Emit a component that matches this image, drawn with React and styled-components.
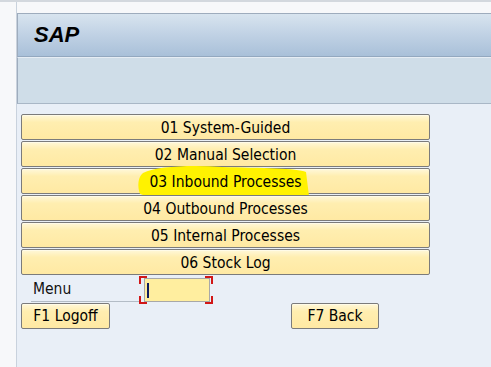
import React from "react";
import styled, { createGlobalStyle } from "styled-components";

const GlobalStyle = createGlobalStyle`
  html, body {
    margin: 0;
    padding: 0;
    width: 491px;
    height: 367px;
    overflow: hidden;
    background: #f7f8fa;
  }
  #root {
    height: 100%;
  }
`;

const menuItems = [
  "01 System-Guided",
  "02 Manual Selection",
  "03 Inbound Processes",
  "04 Outbound Processes",
  "05 Internal Processes",
  "06 Stock Log",
];

const guiFont = `"DejaVu Sans Condensed", "Liberation Sans", Arial, sans-serif`;

const Page = styled.div`
  display: flex;
  flex-direction: column;
  height: 367px;
  font-family: ${guiFont};
  border-top: 2px solid #d3d8de;
  box-sizing: border-box;
`;

const Body = styled.div`
  flex: 1;
  display: flex;
`;

const LeftStrip = styled.div`
  width: 16px;
  background: #f7f8fa;
  border-right: 1px solid #c9d2dd;
`;

const Main = styled.div`
  flex: 1;
  display: flex;
  flex-direction: column;
  padding-top: 11px;
  background: #f7f8fa;
`;

const TitleBar = styled.div`
  height: 42px;
  border-top: 1px solid #9eacbd;
  border-left: 1px solid #9eacbd;
  border-bottom: 1px solid #93a8bf;
  background: linear-gradient(#d8e4ef, #c2d3e5 45%, #a9c0d9);
  display: flex;
  align-items: center;
  padding-left: 16px;
`;

const Title = styled.span`
  font-family: "Liberation Sans", Arial, sans-serif;
  font-weight: bold;
  font-style: italic;
  font-size: 22px;
  color: #000;
  margin-top: -1px;
`;

const Toolbar = styled.div`
  height: 45px;
  border-top: 1px solid #e6edf4;
  border-left: 1px solid #9eacbd;
  border-bottom: 1px solid #a9b7c6;
  background: #cfdde8;
`;

const Content = styled.div`
  flex: 1;
  background: #e9eff7;
  padding: 10px 0 0 4px;
  display: flex;
  flex-direction: column;
`;

const ButtonList = styled.div`
  display: flex;
  flex-direction: column;
  gap: 1px;
`;

const MenuButton = styled.div`
  position: relative;
  width: 407px;
  height: 24px;
  box-sizing: content-box;
  border: 1px solid #7b7b7b;
  border-radius: 2px;
  background: linear-gradient(#fff8da, #ffeeb0 30%, #ffe9a3);
  box-shadow: inset 0 1px 0 #fffbe8;
  display: flex;
  align-items: center;
  justify-content: center;
  font-size: 15.5px;
  color: #000;
`;

const Label = styled.span`
  position: relative;
  z-index: 1;
  top: 1px;
`;

const Marker = styled.svg`
  position: absolute;
  left: 115px;
  top: -4px;
  width: 173px;
  height: 35px;
  z-index: 0;
  overflow: visible;
`;

const FieldRow = styled.div`
  display: flex;
  align-items: center;
  height: 27px;
  margin-top: 1px;
`;

const FieldLabel = styled.div`
  width: 109px;
  margin-left: 10px;
  height: 25px;
  box-sizing: border-box;
  border-bottom: 1px solid #b3bcc6;
  padding-left: 2px;
  display: flex;
  align-items: center;
  font-size: 15.5px;
  color: #111;
`;

const InputWrap = styled.div`
  position: relative;
  margin-left: 4px;
  width: 66px;
  height: 24px;
`;

const Input = styled.div`
  width: 100%;
  height: 100%;
  box-sizing: border-box;
  border: 1px solid #a8a8a8;
  background: #ffee9f;
  position: relative;
`;

const Caret = styled.div`
  position: absolute;
  left: 2px;
  top: 4px;
  width: 2px;
  height: 15px;
  background: #0b1a5e;
`;

const Corner = styled.span`
  position: absolute;
  width: 6px;
  height: 6px;
  border-color: #d11717;
  border-style: solid;
  border-width: 0;
  ${(p) => (p.$v === "t" ? "top: -2px;" : "bottom: -2px;")}
  ${(p) => (p.$h === "l" ? "left: -5px;" : "right: -3px;")}
  ${(p) => (p.$v === "t" ? "border-top-width: 2px;" : "border-bottom-width: 2px;")}
  ${(p) => (p.$h === "l" ? "border-left-width: 2px;" : "border-right-width: 2px;")}
`;

const ActionRow = styled.div`
  display: flex;
  height: 26px;
`;

const KeyButton = styled.div`
  height: 24px;
  width: ${(p) => p.$w}px;
  margin-left: ${(p) => p.$ml}px;
  border: 1px solid #7b7b7b;
  border-radius: 2px;
  background: linear-gradient(#fff8da, #ffeeb0 30%, #ffe9a3);
  box-shadow: inset 0 1px 0 #fffbe8;
  display: flex;
  align-items: center;
  justify-content: center;
  font-size: 15.5px;
  color: #000;
`;

export default function App() {
  return (
    <>
      <GlobalStyle />
      <Page>
        <Body>
          <LeftStrip />
          <Main>
            <TitleBar>
              <Title>SAP</Title>
            </TitleBar>
            <Toolbar />
            <Content>
              <ButtonList>
                {menuItems.map((item, i) => (
                  <MenuButton key={item}>
                    {i === 2 && (
                      <Marker viewBox="0 0 173 35">
                        <path
                          d="M6 8 C 20 1, 55 0, 85 2 C 125 3, 160 3, 169 7 L 172 31 C 155 32, 125 31, 100 32 C 80 34, 55 35, 38 32 C 25 31, 10 32, 3 29 C 0 21, 1 12, 6 8 Z"
                          fill="#fff200"
                        />
                      </Marker>
                    )}
                    <Label>{item}</Label>
                  </MenuButton>
                ))}
              </ButtonList>
              <FieldRow>
                <FieldLabel>Menu</FieldLabel>
                <InputWrap>
                  <Input>
                    <Caret />
                  </Input>
                  <Corner $v="t" $h="l" />
                  <Corner $v="t" $h="r" />
                  <Corner $v="b" $h="l" />
                  <Corner $v="b" $h="r" />
                </InputWrap>
              </FieldRow>
              <ActionRow>
                <KeyButton $w={87} $ml={0}>F1 Logoff</KeyButton>
                <KeyButton $w={86} $ml={181}>F7 Back</KeyButton>
              </ActionRow>
            </Content>
          </Main>
        </Body>
      </Page>
    </>
  );
}
